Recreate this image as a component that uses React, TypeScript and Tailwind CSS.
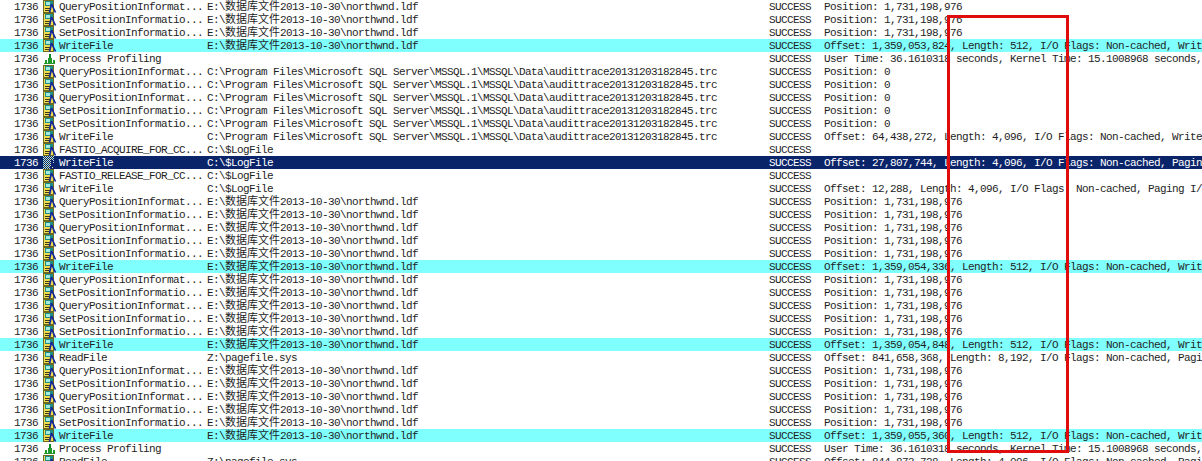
type Row = { op: string; path: string; detail: string; icon?: 'file' | 'profile'; tone?: 'cyan' | 'selected' };

const E = 'e';
const C = 'c';
const L = 'l';
const Z = 'z';

const pos = 'Position: 1,731,198,976';
const zero = 'Position: 0';
const query = 'QueryPositionInformat...';
const set = 'SetPositionInformatio...';
const user = 'User Time: 36.1610318 seconds, Kernel Time: 15.1008968 seconds,';

const rows: Row[] = [
  { op: query, path: E, detail: pos },
  { op: set, path: E, detail: pos },
  { op: set, path: E, detail: pos },
  { op: 'WriteFile', path: E, tone: 'cyan', detail: 'Offset: 1,359,053,824, Length: 512, I/O Flags: Non-cached, Writ' },
  { op: 'Process Profiling', path: '', icon: 'profile', detail: user },
  { op: query, path: C, detail: zero },
  { op: set, path: C, detail: zero },
  { op: query, path: C, detail: zero },
  { op: set, path: C, detail: zero },
  { op: set, path: C, detail: zero },
  { op: 'WriteFile', path: C, detail: 'Offset: 64,438,272, Length: 4,096, I/O Flags: Non-cached, Write' },
  { op: 'FASTIO_ACQUIRE_FOR_CC...', path: L, detail: '' },
  { op: 'WriteFile', path: L, tone: 'selected', detail: 'Offset: 27,807,744, Length: 4,096, I/O Flags: Non-cached, Pagin' },
  { op: 'FASTIO_RELEASE_FOR_CC...', path: L, detail: '' },
  { op: 'WriteFile', path: L, detail: 'Offset: 12,288, Length: 4,096, I/O Flags: Non-cached, Paging I/' },
  { op: query, path: E, detail: pos },
  { op: set, path: E, detail: pos },
  { op: query, path: E, detail: pos },
  { op: set, path: E, detail: pos },
  { op: set, path: E, detail: pos },
  { op: 'WriteFile', path: E, tone: 'cyan', detail: 'Offset: 1,359,054,336, Length: 512, I/O Flags: Non-cached, Writ' },
  { op: query, path: E, detail: pos },
  { op: set, path: E, detail: pos },
  { op: query, path: E, detail: pos },
  { op: set, path: E, detail: pos },
  { op: set, path: E, detail: pos },
  { op: 'WriteFile', path: E, tone: 'cyan', detail: 'Offset: 1,359,054,848, Length: 512, I/O Flags: Non-cached, Writ' },
  { op: 'ReadFile', path: Z, detail: 'Offset: 841,658,368, Length: 8,192, I/O Flags: Non-cached, Pagi' },
  { op: query, path: E, detail: pos },
  { op: set, path: E, detail: pos },
  { op: query, path: E, detail: pos },
  { op: set, path: E, detail: pos },
  { op: set, path: E, detail: pos },
  { op: 'WriteFile', path: E, tone: 'cyan', detail: 'Offset: 1,359,055,360, Length: 512, I/O Flags: Non-cached, Writ' },
  { op: 'Process Profiling', path: '', icon: 'profile', detail: user },
  { op: 'ReadFile', path: Z, detail: 'Offset: 844,873,728, Length: 4,096, I/O Flags: Non-cached, Pagi' },
];

function PathText({ path }: { path: string }) {
  if (path === E) {
    return (
      <>
        E:\<span className="tracking-normal">数据库文件</span>2013-10-30\northwnd.ldf
      </>
    );
  }
  if (path === C) return <>C:\Program Files\Microsoft SQL Server\MSSQL.1\MSSQL\Data\audittrace20131203182845.trc</>;
  if (path === L) return <>C:\$LogFile</>;
  if (path === Z) return <>Z:\pagefile.sys</>;
  return null;
}

function FileIcon({ selected }: { selected: boolean }) {
  if (selected) {
    return (
      <svg width="14" height="13" viewBox="0 0 14 13" shapeRendering="crispEdges">
        <defs>
          <pattern id="dither" width="2" height="2" patternUnits="userSpaceOnUse">
            <rect width="2" height="2" fill="#0a246a" />
            <rect width="1" height="1" fill="#a8e0e8" />
            <rect x="1" y="1" width="1" height="1" fill="#d8e8b0" />
          </pattern>
        </defs>
        <rect x="0" y="0" width="11" height="13" fill="url(#dither)" />
        <path d="M8 4h2v3h1v3h1v3h-2v-3H9v3H7v-3h1z" fill="#0f1f70" />
      </svg>
    );
  }
  return (
    <svg width="14" height="13" viewBox="0 0 14 13">
      <rect x="0.5" y="0.5" width="10" height="12" fill="#f0dc50" stroke="#6e6a20" shapeRendering="crispEdges" />
      <rect x="2" y="1" width="8" height="5" fill="#1d8f88" shapeRendering="crispEdges" />
      <rect x="3" y="2" width="4" height="3" fill="#a5ece0" shapeRendering="crispEdges" />
      <rect x="2" y="8" width="5" height="1" fill="#3d3a18" shapeRendering="crispEdges" />
      <rect x="2" y="10" width="4" height="1" fill="#3d3a18" shapeRendering="crispEdges" />
      <path d="M8.5 4 L6.5 12.5 M8.5 4 L12.5 12.5" stroke="#14279a" strokeWidth="1.7" fill="none" />
    </svg>
  );
}

function ProfileIcon() {
  return (
    <svg width="14" height="13" viewBox="0 0 14 13" shapeRendering="crispEdges">
      <rect x="1" y="11" width="11" height="1" fill="#1f9a2a" />
      <rect x="2" y="8" width="2" height="3" fill="#1f9a2a" />
      <rect x="6" y="2" width="2" height="9" fill="#14861f" />
      <rect x="5" y="6" width="4" height="5" fill="#1f9a2a" />
      <rect x="10" y="8" width="2" height="3" fill="#1f9a2a" />
    </svg>
  );
}

export default function App() {
  return (
    <div className="relative h-[461px] w-[1202px] overflow-hidden bg-white font-['Liberation_Mono','Noto_Sans_CJK_SC',monospace] text-[11px] leading-[12px] tracking-[-0.6px] text-[#1e1e1e]">
      {rows.map((row, i) => (
        <div
          key={i}
          className={
            row.tone === 'cyan'
              ? 'flex h-[13px] items-start whitespace-nowrap bg-[#80ffff] pt-px'
              : row.tone === 'selected'
                ? 'flex h-[13px] items-start whitespace-nowrap bg-[#0a246a] pt-px text-white'
                : 'flex h-[13px] items-start whitespace-nowrap pt-px'
          }
        >
          <span className="w-[43px] shrink-0 pl-[14px]">1736</span>
          <span className="-mt-px flex w-[16px] shrink-0">
            {row.icon === 'profile' ? <ProfileIcon /> : <FileIcon selected={row.tone === 'selected'} />}
          </span>
          <span className="w-[148px] shrink-0">{row.op}</span>
          <span className="w-[562px] shrink-0">
            <PathText path={row.path} />
          </span>
          <span className="w-[55px] shrink-0">SUCCESS</span>
          <span className="min-w-0 flex-1">{row.detail}</span>
        </div>
      ))}
      <div className="absolute left-[947px] top-[15px] h-[438px] w-[122px] border-[3px] border-[#e00c0c]" />
    </div>
  );
}
